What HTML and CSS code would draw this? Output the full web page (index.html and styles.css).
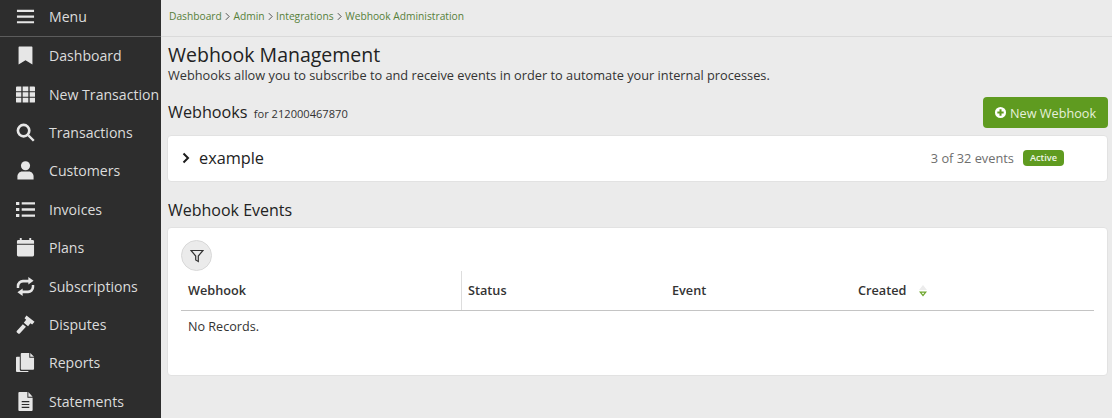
FILE: index.html
```html
<!DOCTYPE html>
<html lang="en">
<head>
<meta charset="utf-8">
<title>Webhook Management</title>
<link rel="stylesheet" href="styles.css">
</head>
<body>
<div class="app">
  <nav class="side">
    <div class="menu-head">
      <svg class="ico" viewBox="0 0 20 20"><path d="M1 3h18v2.200H1zM1 9h18v2.200H1zM1 15h18v2.200H1z"/></svg>
      <span>Menu</span>
    </div>
    <a class="item item-dash"><svg class="ico" viewBox="0 0 20 20"><path d="M3.500 0.500h13a.8.8 0 0 1 .8.8V19.500L10 15l-7.300 4.500V1.300a.8.8 0 0 1 .8-.8z"/></svg><span>Dashboard</span></a>
    <a class="item"><svg class="ico" viewBox="0 0 20 20"><path d="M0 2.500a1 1 0 0 1 1-1h4.600v5H0zM7 1.500h6v5H7zM14.400 1.500H19a1 1 0 0 1 1 1v4h-5.600zM0 7.600h5.600v4.800H0zM7 7.600h6v4.800H7zM14.400 7.600H20v4.800h-5.600zM0 13.500h5.600v5H1a1 1 0 0 1-1-1zM7 13.500h6v5H7zM14.400 13.500H20v4a1 1 0 0 1-1 1h-4.600z"/></svg><span>New Transaction</span></a>
    <a class="item"><svg class="ico" viewBox="0 0 20 20"><circle cx="8" cy="8" r="6" fill="none" stroke="#e6e6e6" stroke-width="2.800"/><path d="M12 13.800l1.800-1.800 5.800 5.800-1.800 1.800z"/></svg><span>Transactions</span></a>
    <a class="item"><svg class="ico" viewBox="0 0 20 20"><circle cx="10" cy="5" r="4.800"/><path d="M1.500 19.500v-3.200c0-3 2.200-5.300 5-5.300h7c2.800 0 5 2.300 5 5.300v3.200z"/></svg><span>Customers</span></a>
    <a class="item"><svg class="ico" viewBox="0 0 20 20"><path d="M0 2h3.500v3.200H0zM6 2.400h14v2.400H6zM0 8.400h3.500v3.200H0zM6 8.800h14v2.400H6zM0 14.800h3.500V18H0zM6 15.200h14v2.400H6z"/></svg><span>Invoices</span></a>
    <a class="item"><svg class="ico" viewBox="0 0 20 20"><path d="M4 0h2v3H4zM14 0h2v3h-2zM2.500 2H17.500A1.500 1.500 0 0 1 19 3.500V6H1V3.500A1.500 1.500 0 0 1 2.500 2zM1 7.200h18V18a1.500 1.500 0 0 1-1.500 1.500h-15A1.500 1.500 0 0 1 1 18z"/></svg><span>Plans</span></a>
    <a class="item"><svg class="ico" viewBox="0 0 20 20"><path d="M13 0l5.500 4L13 8V5.800H8A4.500 4.500 0 0 0 3.400 10v1.500H.8V9.500A6.500 6.500 0 0 1 7.500 3H13zM7 20l-5.500-4L7 12v2.200h5A4.500 4.500 0 0 0 16.600 10V8.500h2.600v2A6.500 6.500 0 0 1 12.500 17H7z"/></svg><span>Subscriptions</span></a>
    <a class="item"><svg class="ico" viewBox="0 0 20 20"><path d="M11 0.500l8.500 6.500-2.500 3-1.800-1.200-2.500 3-4.500-3.600 2.500-3.200L9 3.500zM7.200 9.700l3.300 2.700-6.500 7.100a1.500 1.500 0 0 1-2-.2l-1-1a1.300 1.300 0 0 1 0-1.800z"/></svg><span>Disputes</span></a>
    <a class="item"><svg class="ico" viewBox="0 0 20 20"><path d="M6 0h8v5h5v11.500a1 1 0 0 1-1 1H6a1 1 0 0 1-1-1V1a1 1 0 0 1 1-1zM15 0l4 4h-4zM1 4h3v13.500a1.500 1.500 0 0 0 1.500 1.500H13v1H1a1 1 0 0 1-1-1V5a1 1 0 0 1 1-1z"/></svg><span>Reports</span></a>
    <a class="item"><svg class="ico" viewBox="0 0 20 20"><path fill-rule="evenodd" d="M3.500 0H12v6h5.500v13a1 1 0 0 1-1 1h-13a1 1 0 0 1-1-1V1a1 1 0 0 1 1-1zM13 0l4.500 5H13zM6 9.500v1.300h8V9.500zM6 12.500v1.300h8v-1.300zM6 15.500v1.300h8v-1.300z"/></svg><span>Statements</span></a>
  </nav>
  <div class="main">
    <div class="crumbs">
      <a>Dashboard</a><svg class="sep" viewBox="0 0 6 10"><path d="M1 1l4 4-4 4"/></svg><a>Admin</a><svg class="sep" viewBox="0 0 6 10"><path d="M1 1l4 4-4 4"/></svg><a>Integrations</a><svg class="sep" viewBox="0 0 6 10"><path d="M1 1l4 4-4 4"/></svg><a>Webhook Administration</a>
    </div>
    <div class="content">
      <h1>Webhook Management</h1>
      <p class="lead">Webhooks allow you to subscribe to and receive events in order to automate your internal processes.</p>
      <div class="hook-head">
        <h2>Webhooks <small>for 212000467870</small></h2>
        <button class="btn"><svg class="plus" viewBox="0 0 14 14"><path fill-rule="evenodd" d="M7 1a6 6 0 1 1 0 12A6 6 0 0 1 7 1zM5.900 3.600v2.300H3.600v2.200h2.300v2.300h2.200V8.100h2.300V5.900H8.100V3.600z"/></svg>New Webhook</button>
      </div>
      <div class="card hook">
        <svg class="chev" viewBox="0 0 8 12"><path d="M1.500 1.500L6 6l-4.500 4.500"/></svg>
        <span class="hook-name">example</span>
        <span class="hook-count">3 of 32 events</span>
        <span class="badge">Active</span>
      </div>
      <h3>Webhook Events</h3>
      <div class="card events">
        <div class="filter"><svg viewBox="0 0 14 14"><path d="M1 1.500h12L8.300 7v5.500l-2.600-1.500V7z"/></svg></div>
        <div class="thead">
          <div class="th th-hook">Webhook</div>
          <div class="th th-status">Status</div>
          <div class="th th-event">Event</div>
          <div class="th th-created">Created
            <svg class="sort" viewBox="0 0 10 12"><path class="up" d="M5 0l4 5H1z"/><path class="down" d="M1 6.500h8L5 11.500zM3.500 7.800L5 9.500l1.500-1.700z" fill-rule="evenodd"/></svg>
          </div>
        </div>
        <div class="empty">No Records.</div>
      </div>
    </div>
  </div>
</div>
</body>
</html>
```
FILE: styles.css
```css
* { box-sizing: border-box; }
html, body { margin: 0; height: 100%; overflow: hidden; }
body {
  font-family: "Open Sans", "Noto Sans", sans-serif;
  background: #ebebeb;
  color: #222;
}
.app { display: flex; height: 418px; overflow: hidden; }
.side {
  width: 161px;
  flex: none;
  background: #2d2d2d;
  color: #dcdcdc;
  font-size: 14.100px;
  overflow: hidden;
}
.menu-head {
  display: flex;
  align-items: center;
  gap: 14px;
  height: 37px;
  padding: 0 0 3px 16px;
  border-bottom: 1px solid #5c5c5c;
}
.item {
  display: flex;
  align-items: center;
  gap: 14px;
  height: 38.400px;
  padding-left: 16px;
  white-space: nowrap;
}
.item-dash { margin-top: -0.400px; }
.ico { width: 19px; height: 19px; flex: none; fill: #e6e6e6; }
.main { flex: 1; min-width: 0; }
.crumbs {
  height: 37px;
  padding: 0 0 4px 8px;
  display: flex;
  align-items: center;
  font-size: 10.240px;
  color: #567f3a;
  border-bottom: 1px solid #dadada;
}
.sep { width: 5px; height: 9px; margin: 0 3.300px; fill: none; stroke: #444; stroke-width: 1.100; }
.content { padding: 5px 4px 0 7px; }
h1 { margin: 0; font-size: 19.500px; font-weight: 400; line-height: 26px; color: #222; }
.lead { margin: 0; font-size: 12.780px; line-height: 15px; color: #333; }
.hook-head {
  display: flex;
  align-items: center;
  justify-content: space-between;
  margin-top: 14px;
  height: 31px;
}
h2 { margin: 0; font-size: 16.200px; font-weight: 400; line-height: 22px; color: #222; }
h2 small { font-size: 11.100px; margin-left: 2px; color: #333; }
.btn {
  display: flex;
  align-items: center;
  gap: 3px;
  width: 125px;
  height: 31px;
  padding: 0 0 0 11px;
  border: 0;
  border-radius: 4px;
  background: #5f9b20;
  color: #e6f0da;
  font: 400 12.700px "Open Sans", sans-serif;
}
.plus { width: 13px; height: 13px; fill: #fff; }
.card {
  background: #fff;
  border: 1px solid #e2e2e2;
  border-radius: 4px;
  margin-left: -1px;
}
.hook {
  display: flex;
  align-items: center;
  height: 47px;
  margin-top: 7px;
  padding: 0 43px 1px 14px;
}
.chev { width: 8px; height: 12px; fill: none; stroke: #1c1c1c; stroke-width: 2; }
.hook-name { margin-left: 9px; font-size: 16.300px; color: #222; }
.hook-count { margin-left: auto; font-size: 12.800px; color: #6e6e6e; }
.badge {
  margin-left: 9px;
  padding: 0 7px;
  height: 16px;
  line-height: 16px;
  font-size: 9.200px;
  font-weight: 600;
  border-radius: 4px;
  background: #5f9b20;
  color: #eef5e6;
}
h3 { margin: 18px 0 0; font-size: 16px; font-weight: 400; line-height: 21px; color: #222; }
.events {
  margin-top: 6px;
  height: 149px;
  padding: 12px 13px 0 13px;
}
.filter {
  width: 31px;
  height: 31px;
  border-radius: 50%;
  background: #ebebeb;
  border: 1px solid #d8d8d8;
  display: flex;
  align-items: center;
  justify-content: center;
}
.filter svg { width: 14px; height: 14px; fill: none; stroke: #333; stroke-width: 1.200; }
.thead {
  display: flex;
  height: 40px;
  border-bottom: 1px solid #c4c4c4;
  font-size: 12.700px;
  font-weight: 600;
  color: #333;
}
.th { display: flex; align-items: center; padding: 0 0 2px 7px; }
.th-hook { width: 281px; border-right: 1px solid #ddd; }
.th-status { width: 204px; padding-left: 6px; }
.th-event { width: 186px; padding-left: 6px; }
.th-created { padding-left: 6px; }
.sort { width: 10px; height: 12px; margin-left: 12px; margin-top: 3px; }
.sort .up { fill: #ececec; }
.sort .down { fill: #6da62c; }
.empty { padding: 8px 7px; font-size: 12.600px; line-height: 16px; color: #333; }
```
